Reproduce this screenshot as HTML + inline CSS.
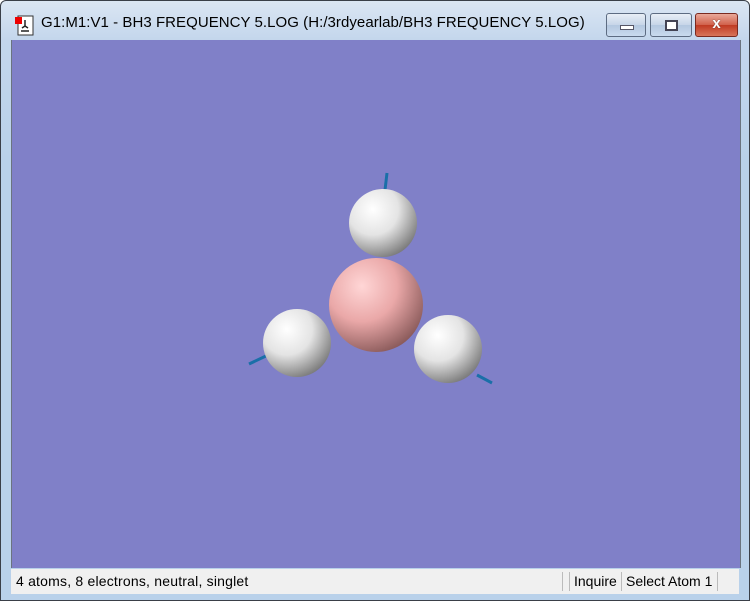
<!DOCTYPE html>
<html><head><style>
body{margin:0;width:750px;height:600px;overflow:hidden;font-family:"Liberation Sans",sans-serif;}
.win{position:absolute;left:0;top:0;width:748px;height:599px;border:1px solid #3a3f48;border-radius:6px 6px 0 0;background:linear-gradient(#dbe6f3 0,#c3d6ec 40px,#b9d1ea 160px,#b9d1ea 100%);}
.title{position:absolute;left:40px;top:13px;font-size:15px;color:#000;letter-spacing:0.05px;white-space:nowrap;}
.btn{position:absolute;top:12px;height:22px;border:1px solid #5d6c82;border-radius:3px;background:linear-gradient(#e8eef6,#c6d5e8 50%,#b4c7df 51%,#c9daee);}
.view{position:absolute;left:10px;top:39px;width:728px;height:528px;background:#8080c8;border-left:1px solid #6b7480;border-right:1px solid #6b7480;}
.status{position:absolute;left:10px;top:568px;width:728px;height:25px;background:#f0f0f0;font-size:14px;}
.status span{position:absolute;top:4px;white-space:nowrap;}
</style></head><body>
<div class="win">
<svg style="position:absolute;left:13px;top:13px" width="22" height="22"><rect x="4" y="2" width="15" height="19" fill="#fff" stroke="#333"/><rect x="1" y="3" width="7" height="7" fill="#e00"/><path d="M11 6v6M8 14l3-2 3 2M7 17h8" stroke="#222" stroke-width="1.5" fill="none"/></svg>
<div class="title">G1:M1:V1 - BH3 FREQUENCY 5.LOG (H:/3rdyearlab/BH3 FREQUENCY 5.LOG)</div>
<div class="btn" style="left:605px;width:38px"><div style="position:absolute;left:13px;top:11px;width:12px;height:3px;background:#fff;border:1px solid #556"></div></div>
<div class="btn" style="left:649px;width:40px"><div style="position:absolute;left:14px;top:6px;width:9px;height:7px;border:2px solid #445;background:#fff"></div></div>
<div class="btn" style="left:694px;width:41px;border-color:#7a2a20;background:linear-gradient(#e9a99a,#d0604a 50%,#c03a22 51%,#d8745a)"><div style="position:absolute;left:0;top:1px;width:41px;text-align:center;color:#fff;font-weight:bold;font-size:15px;text-shadow:0 0 1px #333">x</div></div>
<div class="view">
<svg width="728" height="528" style="position:absolute;left:0;top:0">
<defs>
<radialGradient id="w" cx="0.35" cy="0.3" r="0.75"><stop offset="0" stop-color="#ffffff"/><stop offset="0.5" stop-color="#e4e4e4"/><stop offset="1" stop-color="#7a7a7a"/></radialGradient>
<radialGradient id="p" cx="0.35" cy="0.3" r="0.75"><stop offset="0" stop-color="#ffd6d6"/><stop offset="0.5" stop-color="#eaa8a8"/><stop offset="1" stop-color="#8a5a5a"/></radialGradient>
</defs>
<g stroke="#1a6fa8" stroke-width="3">
<line x1="375" y1="133" x2="373" y2="150"/>
<line x1="237" y1="324" x2="256" y2="315"/>
<line x1="465" y1="335" x2="480" y2="343"/>
</g>
<circle cx="364" cy="265" r="47" fill="url(#p)"/>
<circle cx="371" cy="183" r="34" fill="url(#w)"/>
<circle cx="285" cy="303" r="34" fill="url(#w)"/>
<circle cx="436" cy="309" r="34" fill="url(#w)"/>
</svg>
</div>
<div class="status">
<span style="left:5px;letter-spacing:0.2px">4 atoms, 8 electrons, neutral, singlet</span>
<div style="position:absolute;left:551px;top:3px;width:1px;height:19px;background:#bbb"></div>
<div style="position:absolute;left:558px;top:3px;width:1px;height:19px;background:#bbb"></div>
<span style="left:563px">Inquire</span>
<div style="position:absolute;left:610px;top:3px;width:1px;height:19px;background:#bbb"></div>
<span style="left:615px">Select Atom 1</span>
<div style="position:absolute;left:706px;top:3px;width:1px;height:19px;background:#bbb"></div>
</div>
</div>
</body></html>
